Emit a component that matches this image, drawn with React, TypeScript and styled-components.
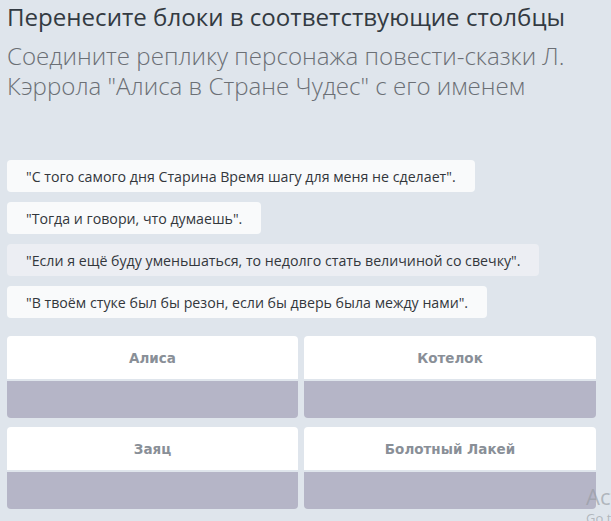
import styled, { createGlobalStyle } from 'styled-components';

const GlobalStyle = createGlobalStyle`
  html, body {
    margin: 0;
    padding: 0;
    background: #dfe5ec;
  }
  body {
    font-family: "Open Sans", "Noto Sans", sans-serif;
    overflow: hidden;
  }
`;

const Page = styled.div`
  position: relative;
  width: 611px;
  height: 521px;
  padding: 0 7px;
  box-sizing: border-box;
  background: #dfe5ec;
  overflow: hidden;
`;

const Title = styled.h1`
  margin: 0;
  padding-top: 2px;
  font-size: 24.1px;
  line-height: 30px;
  font-weight: 400;
  color: #333a42;
  white-space: nowrap;
`;

const Subtitle = styled.p`
  margin: 9px 0 0;
  font-size: 24.1px;
  line-height: 30px;
  font-weight: 300;
  color: #6b6f75;
`;

const Chips = styled.div`
  display: flex;
  flex-direction: column;
  align-items: flex-start;
  gap: 10px;
  margin-top: 59px;
`;

const Chip = styled.div<{ $hover?: boolean }>`
  height: 32px;
  display: flex;
  align-items: center;
  padding: 0 19px;
  border-radius: 4px;
  background: ${(p) => (p.$hover ? '#eceef3' : '#f9fafb')};
  color: #33373c;
  font-size: 14.2px;
  white-space: nowrap;
`;

const Grid = styled.div`
  display: grid;
  grid-template-columns: 291px 292px;
  column-gap: 6px;
  row-gap: 9px;
  margin-top: 18px;
`;

const Column = styled.div`
  border-radius: 4px;
  overflow: hidden;
  display: flex;
  flex-direction: column;
  gap: 2px;
`;

const ColumnHead = styled.div`
  height: 43px;
  background: #ffffff;
  display: flex;
  align-items: center;
  justify-content: center;
  font-family: "DejaVu Sans", Verdana, sans-serif;
  font-weight: 700;
  font-size: 13.5px;
  color: #898f97;
`;

const DropZone = styled.div`
  height: 37px;
  background: #b5b5c7;
`;

const Watermark = styled.div`
  position: absolute;
  left: 586px;
  top: 483px;
  color: rgba(150, 155, 162, 0.65);
  font-family: "Open Sans", sans-serif;
  white-space: nowrap;
  pointer-events: none;
`;

const WatermarkBig = styled.div`
  font-size: 22px;
  line-height: 26px;
`;

const WatermarkSmall = styled.div`
  font-size: 13px;
  line-height: 18px;
`;

const PHRASES = [
  '"С того самого дня Старина Время шагу для меня не сделает".',
  '"Тогда и говори, что думаешь".',
  '"Если я ещё буду уменьшаться, то недолго стать величиной со свечку".',
  '"В твоём стуке был бы резон, если бы дверь была между нами".',
];

const NAMES = ['Алиса', 'Котелок', 'Заяц', 'Болотный Лакей'];

export default function App() {
  return (
    <>
      <GlobalStyle />
      <Page>
        <Title>Перенесите блоки в соответствующие столбцы</Title>
        <Subtitle>
          Соедините реплику персонажа повести-сказки Л. Кэррола "Алиса в Стране Чудес" с его именем
        </Subtitle>
        <Chips>
          {PHRASES.map((p, i) => (
            <Chip key={p} $hover={i === 2}>
              {p}
            </Chip>
          ))}
        </Chips>
        <Grid>
          {NAMES.map((n) => (
            <Column key={n}>
              <ColumnHead>{n}</ColumnHead>
              <DropZone />
            </Column>
          ))}
        </Grid>
        <Watermark>
          <WatermarkBig>Activate Windows</WatermarkBig>
          <WatermarkSmall>Go to Settings to activate Windows.</WatermarkSmall>
        </Watermark>
      </Page>
    </>
  );
}
